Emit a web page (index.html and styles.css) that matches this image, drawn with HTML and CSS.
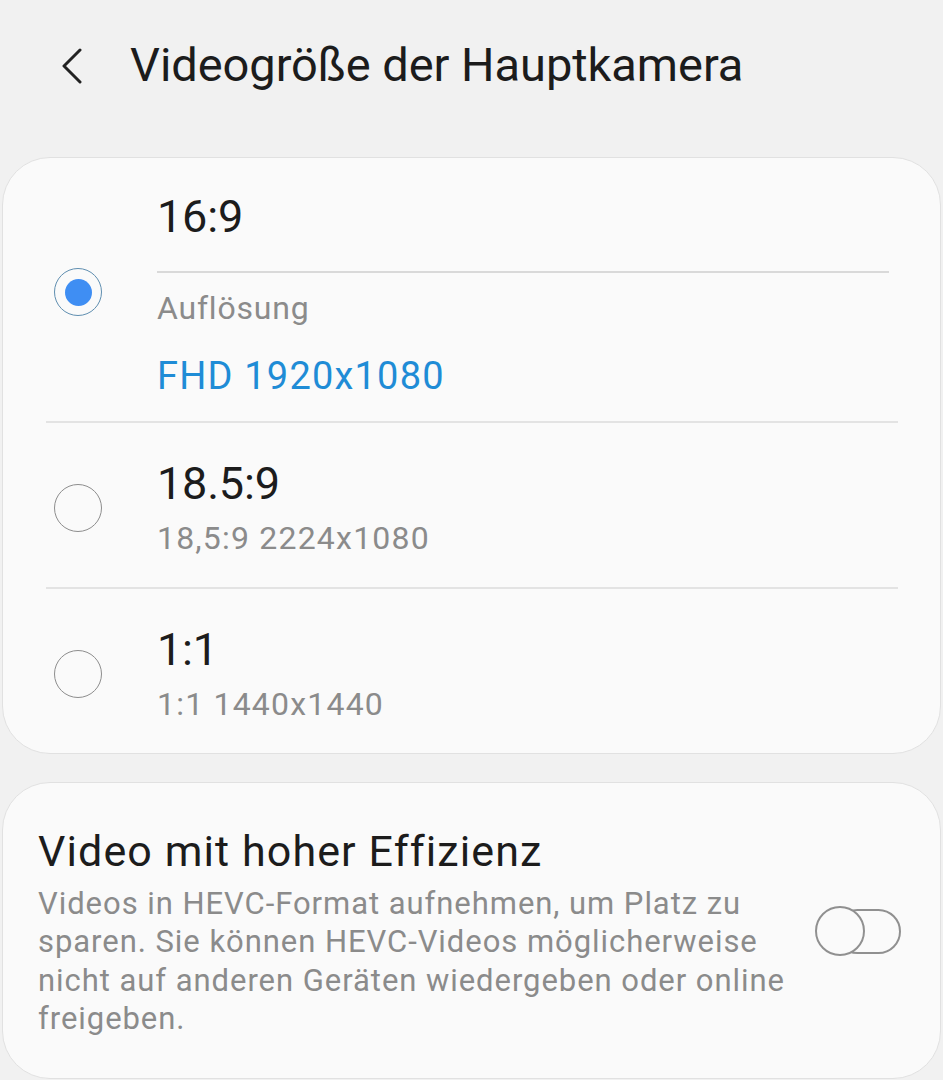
FILE: index.html
```html
<!DOCTYPE html>
<html lang="de">
<head>
<meta charset="utf-8">
<title>Videogröße der Hauptkamera</title>
<link rel="stylesheet" href="styles.css">
</head>
<body>
<header class="appbar">
  <span class="back">
    <svg width="26" height="36" viewBox="0 0 26 36"><path d="M21 2 L5 18 L21 34" fill="none" stroke="#222" stroke-width="3" stroke-linecap="round" stroke-linejoin="round"/></svg>
  </span>
  <h1 class="title">Videogröße der Hauptkamera</h1>
</header>

<section class="card options">
  <div class="row first">
    <div class="radio-col"><span class="radio checked"></span></div>
    <div class="text-col">
      <div class="opt-title">16:9</div>
      <div class="inner-divider"></div>
      <div class="label">Auflösung</div>
      <div class="value">FHD 1920x1080</div>
    </div>
  </div>
  <div class="divider"></div>
  <div class="row">
    <div class="radio-col"><span class="radio"></span></div>
    <div class="text-col">
      <div class="opt-title">18.5:9</div>
      <div class="sub">18,5:9 2224x1080</div>
    </div>
  </div>
  <div class="divider"></div>
  <div class="row">
    <div class="radio-col"><span class="radio"></span></div>
    <div class="text-col">
      <div class="opt-title">1:1</div>
      <div class="sub">1:1 1440x1440</div>
    </div>
  </div>
</section>

<section class="card setting">
  <div class="setting-text">
    <div class="setting-title">Video mit hoher Effizienz</div>
    <div class="setting-desc">Videos in HEVC-Format aufnehmen, um Platz zu sparen. Sie können HEVC-Videos möglicherweise nicht auf anderen Geräten wiedergeben oder online freigeben.</div>
  </div>
  <div class="switch">
    <span class="track"></span>
    <span class="thumb"></span>
  </div>
</section>
</body>
</html>
```

FILE: styles.css
```css
* { box-sizing: border-box; }
html, body { margin: 0; padding: 0; }
body {
  width: 943px;
  height: 1080px;
  overflow: hidden;
  background: #f1f1f1;
  font-family: Roboto, "Noto Sans", sans-serif;
  color: #1c1c1c;
}

.appbar {
  height: 157px;
  display: flex;
  align-items: flex-start;
  padding-top: 35px;
}
.back {
  width: 130px;
  padding-left: 59px;
  padding-top: 13px;
  display: flex;
}
.title {
  margin: 0;
  font-weight: 400;
  font-size: 47px;
  line-height: 60px;
  letter-spacing: -0.05px;
  color: #1c1c1c;
}

.card {
  margin: 0 2px;
  background: #fafafa;
  border: 1px solid #e1e1e1;
  border-radius: 48px;
}

.row {
  display: flex;
  align-items: center;
  padding: 34px 0 29px;
}
.row.first { padding: 32px 0 21px; }
.row.first .radio-col { margin-top: -6px; }
.radio-col {
  width: 154px;
  flex: none;
  padding-left: 51px;
  display: flex;
}
.radio {
  width: 48px;
  height: 48px;
  border-radius: 50%;
  border: 1.5px solid #8d8d8d;
  display: flex;
  align-items: center;
  justify-content: center;
}
.radio.checked { border-color: #5f8eb0; }
.radio.checked::after {
  content: "";
  width: 27px;
  height: 27px;
  border-radius: 50%;
  background: #3f8ef3;
}
.text-col { flex: 1; padding-right: 51px; }
.opt-title {
  font-size: 45px;
  line-height: 54px;
  letter-spacing: -0.2px;
  color: #1c1c1c;
}
.inner-divider {
  height: 2px;
  background: #d9d9d9;
  margin: 27px 0 15px;
}
.label {
  font-size: 32px;
  line-height: 40px;
  letter-spacing: 0.8px;
  color: #8b8b8b;
}
.value {
  margin-top: 24px;
  font-size: 38px;
  line-height: 48px;
  letter-spacing: 1.2px;
  color: #1f8cd6;
}
.sub {
  margin-top: 7px;
  font-size: 32px;
  line-height: 40px;
  letter-spacing: 1.2px;
  color: #8b8b8b;
}
.divider {
  height: 2px;
  background: #e3e3e3;
  margin: 0 42px 0 43px;
}

.setting {
  margin-top: 28px;
  height: 297px;
  display: flex;
  align-items: center;
  padding: 0 40px 0 35px;
}
.setting-text { width: 765px; flex: none; }
.setting-title {
  font-size: 43px;
  line-height: 56px;
  letter-spacing: 1.1px;
  color: #1c1c1c;
}
.setting-desc {
  margin-top: 6px;
  font-size: 31px;
  line-height: 38.3px;
  letter-spacing: 0.95px;
  color: #8b8b8b;
}
.switch {
  position: relative;
  margin-left: 12px;
  width: 87px;
  height: 50px;
}
.track {
  position: absolute;
  left: 20px;
  top: 3px;
  width: 66px;
  height: 45px;
  border: 2.5px solid #909090;
  border-radius: 23px;
}
.thumb {
  position: absolute;
  left: 0;
  top: 0;
  width: 50px;
  height: 50px;
  border: 2.5px solid #909090;
  border-radius: 50%;
  background: #fafafa;
}
```
